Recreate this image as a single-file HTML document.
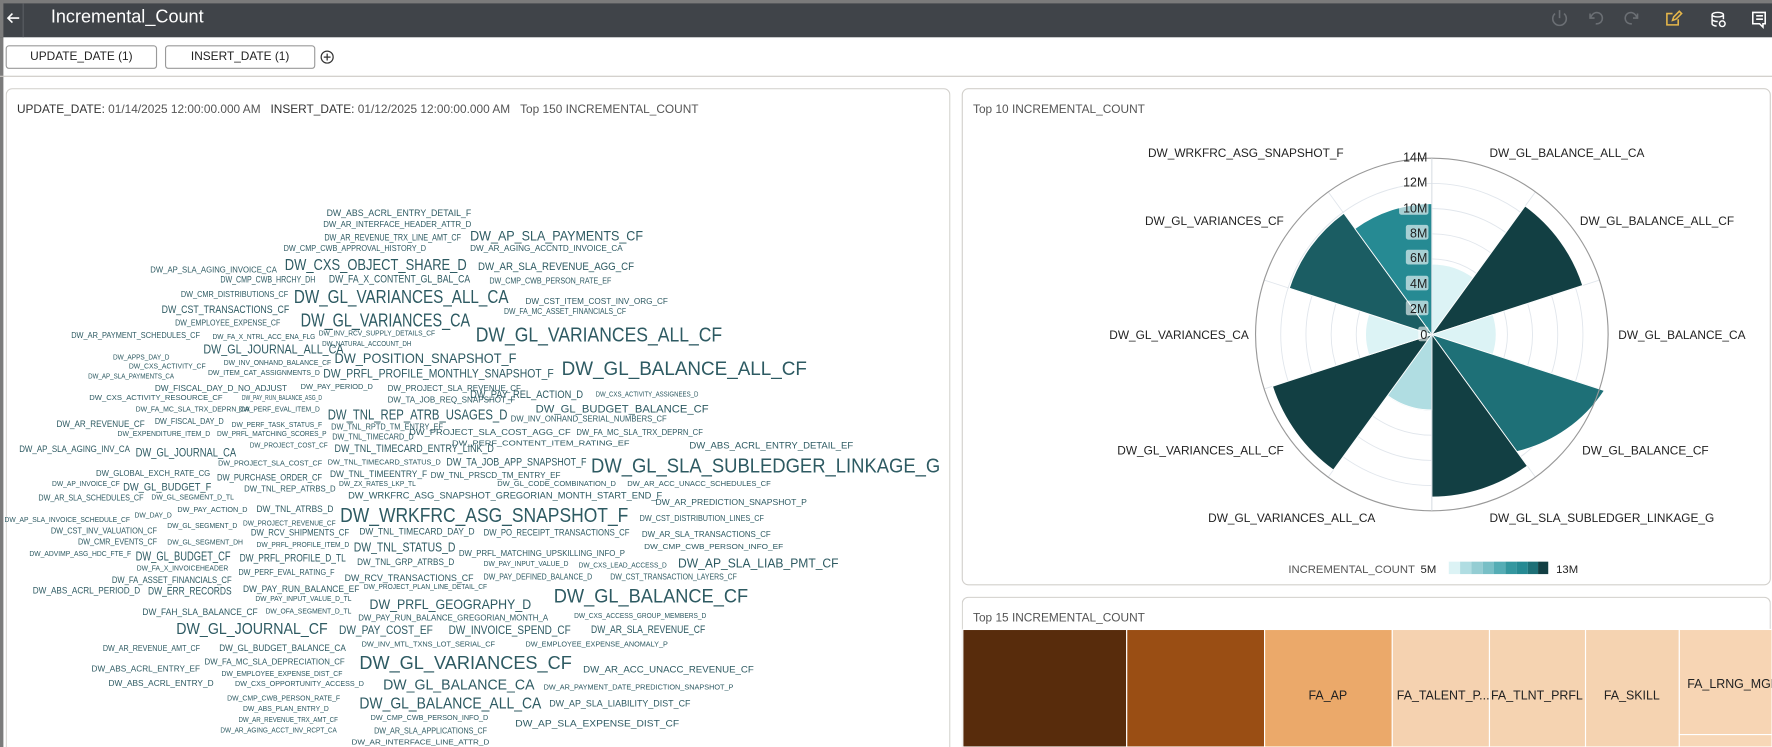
<!DOCTYPE html>
<html><head><meta charset="utf-8"><style>
*{box-sizing:border-box;margin:0;padding:0}
html,body{width:1772px;height:747px;overflow:hidden;background:#fff;font-family:"Liberation Sans",sans-serif}
#s{position:absolute;left:0;top:0;width:1568px;height:661px;transform:scale(1.1301);transform-origin:0 0;overflow:hidden;background:#fff}
.abs{position:absolute}
.hdr{left:0;top:0;width:1568px;height:33px;background:#404449;border-top:3px solid #7b7b7b;border-left:3px solid #7b7b7b}
.btn{position:absolute;top:40px;height:21px;border:1px solid #9a9a9a;border-radius:3px;font-size:10.5px;color:#222;text-align:center;line-height:19px}
.card{position:absolute;border:1px solid #d2d0cc;border-radius:6px;background:#fff}
.t{font-size:10.5px;color:#555;white-space:nowrap}
#wc text{fill:#2d5a62;font-family:"Liberation Sans",sans-serif}
</style></head><body><div id="s">
<div class="abs" style="left:0;top:0;width:3px;height:661px;background:#7b7b7b"></div>
<div class="abs hdr"></div>
<div class="abs" style="left:20px;top:3px;width:1px;height:30px;background:#5a5e63"></div>
<svg class="abs" style="left:5px;top:10px" width="13" height="12" viewBox="0 0 13 12"><path d="M12 6H2M6 2L2 6l4 4" stroke="#fff" stroke-width="1.4" fill="none"/></svg>
<div class="abs" style="left:45px;top:7px;font-size:16px;color:#fff">Incremental_Count</div>
<svg class="abs" style="left:1370px;top:7px" width="195" height="20" viewBox="0 0 195 20">
<g fill="none" stroke="#6b6f74" stroke-width="1.4"><path d="M6 5a6 6 0 1 0 8 0M10 2v7"/><path d="M42 14a5 5 0 1 0-3-8l-2 3M37 5v4h4"/><path d="M74 14a5 5 0 1 1 3-8l2 3M79 5v4h-4"/></g>
<g fill="none" stroke="#e5b64a" stroke-width="1.4"><path d="M110 5h-5v10h10v-5"/><path d="M110 11l1-3 5-5 2 2-5 5z"/></g>
<g fill="none" stroke="#fff" stroke-width="1.3"><ellipse cx="150" cy="6" rx="5" ry="2"/><path d="M145 6v8c0 1 2 2 4 2M155 6v4M145 10c0 1 2 2 5 2"/><circle cx="154" cy="14" r="2.5"/></g>
<g fill="none" stroke="#fff" stroke-width="1.4"><path d="M181 4h11v10h-2v3l-3-3h-6z"/><path d="M184 7h6M184 10h6"/></g>
</svg>
<div class="btn" style="left:5px;width:134px">UPDATE_DATE (1)</div>
<div class="btn" style="left:146px;width:133px">INSERT_DATE (1)</div>
<svg class="abs" style="left:283px;top:44px" width="13" height="13"><circle cx="6.5" cy="6.5" r="5.3" fill="none" stroke="#333" stroke-width="1.1"/><path d="M6.5 3.5v6M3.5 6.5h6" stroke="#333" stroke-width="1.1"/></svg>
<div class="abs" style="left:0;top:67px;width:1568px;height:1px;background:#ccc9c4"></div>
<div class="card" style="left:5px;top:78px;width:836px;height:583px;border-bottom:none;border-radius:6px 6px 0 0"></div>
<div class="abs t" style="left:15px;top:91px;color:#333">UPDATE_DATE: <span style="color:#555">01/14/2025 12:00:00.000 AM</span>&nbsp;&nbsp;&nbsp;INSERT_DATE: <span style="color:#555">01/12/2025 12:00:00.000 AM</span>&nbsp;&nbsp;&nbsp;<span style="color:#555">Top 150 INCREMENTAL_COUNT</span></div>
<div class="card" style="left:851px;top:78px;width:716px;height:440px"></div>
<div class="abs t" style="left:861px;top:91px">Top 10 INCREMENTAL_COUNT</div>
<div class="card" style="left:851px;top:528px;width:716px;height:133px;border-bottom:none;border-radius:6px 6px 0 0"></div>
<div class="abs t" style="left:861px;top:541px">Top 15 INCREMENTAL_COUNT</div>

<svg class="abs" style="left:0;top:0" width="1568" height="661" viewBox="0 0 1568 661">
<g id="polar">
<g fill="none" stroke="#e1e6ec" stroke-width="0.8">
<circle cx="1267" cy="296" r="22.3"/><circle cx="1267" cy="296" r="44.6"/><circle cx="1267" cy="296" r="66.9"/><circle cx="1267" cy="296" r="89.1"/><circle cx="1267" cy="296" r="111.4"/><circle cx="1267" cy="296" r="133.7"/>
<path d="M1267 296L1267 140M1267 296L1358.7 169.8M1267 296L1415.4 247.8M1267 296L1415.4 344.2M1267 296L1358.7 422.2M1267 296L1267 452M1267 296L1175.3 422.2M1267 296L1118.6 344.2M1267 296L1118.6 247.8M1267 296L1175.3 169.8"/>
</g>
<g stroke="#fff" stroke-width="0.8">
<path d="M1267 296L1267 233.6A62.4 62.4 0 0 1 1303.7 245.5Z" fill="#dcf3f5"/>
<path d="M1267 296L1349.6 182.3A140.4 140.4 0 0 1 1400.5 252.6Z" fill="#123f43"/>
<path d="M1267 296L1321.1 278.4A56.9 56.9 0 0 1 1321.1 313.6Z" fill="#dcf3f5"/>
<path d="M1267 296L1419.6 345.6A128.1 128.1 0 0 1 1342.3 399.6Z" fill="#1e7077"/>
<path d="M1267 296L1351.5 412.3A143.8 143.8 0 0 1 1267 439.8Z" fill="#123f43"/>
<path d="M1267 296L1267 362.8A66.8 66.8 0 0 1 1227.7 350Z" fill="#b0dde2"/>
<path d="M1267 296L1179.9 415.9A148.2 148.2 0 0 1 1126 341.8Z" fill="#123f43"/>
<path d="M1267 296L1211.3 314.1A57.9 57.9 0 0 1 1211.3 277.9Z" fill="#dcf3f5"/>
<path d="M1267 296L1140.9 255A132.6 132.6 0 0 1 1189.1 188.7Z" fill="#1b5d63"/>
<path d="M1267 296L1198.9 202.3A115.9 115.9 0 0 1 1267 180.1Z" fill="#268a93"/>
</g>
<circle cx="1267" cy="296" r="156" fill="none" stroke="#999" stroke-width="1"/>
<line x1="1267" y1="140" x2="1267" y2="452" stroke="#d8dde3" stroke-width="0.8"/>
<g font-size="11" fill="#222" text-anchor="end" font-family="Liberation Sans,sans-serif">
<g fill="#fff" fill-opacity="0.6"><rect x="1238" y="177" width="26" height="13" rx="2"/><rect x="1244" y="199" width="20" height="13" rx="2"/><rect x="1244" y="221" width="20" height="13" rx="2"/><rect x="1244" y="244" width="20" height="13" rx="2"/><rect x="1244" y="266" width="20" height="13" rx="2"/><rect x="1255" y="289" width="9" height="13" rx="2"/></g>
<text x="1263" y="143">14M</text><text x="1263" y="165">12M</text><text x="1263" y="188">10M</text><text x="1263" y="210">8M</text><text x="1263" y="232">6M</text><text x="1263" y="255">4M</text><text x="1263" y="277">2M</text><text x="1263" y="300">0</text>
</g>
<g font-size="10.5" fill="#222" font-family="Liberation Sans,sans-serif">
<text x="1189" y="139" text-anchor="end">DW_WRKFRC_ASG_SNAPSHOT_F</text>
<text x="1318" y="139">DW_GL_BALANCE_ALL_CA</text>
<text x="1136" y="199" text-anchor="end">DW_GL_VARIANCES_CF</text>
<text x="1398" y="199">DW_GL_BALANCE_ALL_CF</text>
<text x="1105" y="300" text-anchor="end">DW_GL_VARIANCES_CA</text>
<text x="1432" y="300">DW_GL_BALANCE_CA</text>
<text x="1136" y="402" text-anchor="end">DW_GL_VARIANCES_ALL_CF</text>
<text x="1400" y="402">DW_GL_BALANCE_CF</text>
<text x="1217" y="462" text-anchor="end">DW_GL_VARIANCES_ALL_CA</text>
<text x="1318" y="462">DW_GL_SLA_SUBLEDGER_LINKAGE_G</text>
<text x="1140" y="507" fill="#555" font-size="10">INCREMENTAL_COUNT</text>
<text x="1257" y="507" font-size="10">5M</text>
<text x="1377" y="507" font-size="10">13M</text>
</g>
<g><rect x="1282" y="497" width="10" height="11" fill="#dcf3f5"/><rect x="1292" y="497" width="10" height="11" fill="#b0dde2"/><rect x="1302" y="497" width="10" height="11" fill="#94cdd3"/><rect x="1312" y="497" width="10" height="11" fill="#78bfc6"/><rect x="1322" y="497" width="10" height="11" fill="#55adb5"/><rect x="1332" y="497" width="10" height="11" fill="#34979f"/><rect x="1342" y="497" width="10" height="11" fill="#268a93"/><rect x="1352" y="497" width="9" height="11" fill="#1e7077"/><rect x="1361" y="497" width="9" height="11" fill="#123f43"/></g>
</g>
<g id="tm" stroke="#fff" stroke-width="1">
<rect x="852" y="557" width="145" height="104" fill="#582c0c"/>
<rect x="997" y="557" width="122" height="104" fill="#9a4e14"/>
<rect x="1119" y="557" width="113" height="104" fill="#eba96a"/>
<rect x="1232" y="557" width="86" height="104" fill="#f5d2b0"/>
<rect x="1318" y="557" width="85" height="104" fill="#f5d3b1"/>
<rect x="1403" y="557" width="83" height="104" fill="#f5d3b1"/>
<rect x="1486" y="557" width="82" height="93" fill="#f7d5b4"/>
<rect x="1486" y="650" width="82" height="11" fill="#f7d7b7"/>
</g>
<g font-size="11" fill="#222" font-family="Liberation Sans,sans-serif">
<text x="1175" y="619" text-anchor="middle">FA_AP</text>
<text x="1236" y="619">FA_TALENT_P...</text>
<text x="1360" y="619" text-anchor="middle">FA_TLNT_PRFL</text>
<text x="1444" y="619" text-anchor="middle">FA_SKILL</text>
<text x="1493" y="609">FA_LRNG_MGM</text>
</g>
<g id="wc">
<text x="289" y="191" font-size="8" textLength="128" lengthAdjust="spacingAndGlyphs">DW_ABS_ACRL_ENTRY_DETAIL_F</text>
<text x="286" y="201" font-size="7" textLength="131" lengthAdjust="spacingAndGlyphs">DW_AR_INTERFACE_HEADER_ATTR_D</text>
<text x="287" y="213" font-size="8" textLength="121" lengthAdjust="spacingAndGlyphs">DW_AR_REVENUE_TRX_LINE_AMT_CF</text>
<text x="416" y="213" font-size="12.5" textLength="153" lengthAdjust="spacingAndGlyphs">DW_AP_SLA_PAYMENTS_CF</text>
<text x="251" y="222" font-size="7" textLength="126" lengthAdjust="spacingAndGlyphs">DW_CMP_CWB_APPROVAL_HISTORY_D</text>
<text x="416" y="222" font-size="7" textLength="135" lengthAdjust="spacingAndGlyphs">DW_AR_AGING_ACCNTD_INVOICE_CA</text>
<text x="133" y="241" font-size="7" textLength="112" lengthAdjust="spacingAndGlyphs">DW_AP_SLA_AGING_INVOICE_CA</text>
<text x="252" y="239" font-size="13.5" textLength="161" lengthAdjust="spacingAndGlyphs">DW_CXS_OBJECT_SHARE_D</text>
<text x="423" y="239" font-size="9.5" textLength="138" lengthAdjust="spacingAndGlyphs">DW_AR_SLA_REVENUE_AGG_CF</text>
<text x="195" y="250" font-size="8.5" textLength="84" lengthAdjust="spacingAndGlyphs">DW_CMP_CWB_HRCHY_DH</text>
<text x="291" y="250" font-size="9.5" textLength="125" lengthAdjust="spacingAndGlyphs">DW_FA_X_CONTENT_GL_BAL_CA</text>
<text x="433" y="251" font-size="7" textLength="108" lengthAdjust="spacingAndGlyphs">DW_CMP_CWB_PERSON_RATE_EF</text>
<text x="160" y="263" font-size="7.5" textLength="95" lengthAdjust="spacingAndGlyphs">DW_CMR_DISTRIBUTIONS_CF</text>
<text x="260" y="268" font-size="16" textLength="190" lengthAdjust="spacingAndGlyphs">DW_GL_VARIANCES_ALL_CA</text>
<text x="143" y="277" font-size="9.5" textLength="113" lengthAdjust="spacingAndGlyphs">DW_CST_TRANSACTIONS_CF</text>
<text x="465" y="269" font-size="7" textLength="126" lengthAdjust="spacingAndGlyphs">DW_CST_ITEM_COST_INV_ORG_CF</text>
<text x="266" y="289" font-size="16" textLength="150" lengthAdjust="spacingAndGlyphs">DW_GL_VARIANCES_CA</text>
<text x="155" y="288" font-size="7.5" textLength="93" lengthAdjust="spacingAndGlyphs">DW_EMPLOYEE_EXPENSE_CF</text>
<text x="446" y="278" font-size="7" textLength="108" lengthAdjust="spacingAndGlyphs">DW_FA_MC_ASSET_FINANCIALS_CF</text>
<text x="63" y="299" font-size="7.5" textLength="114" lengthAdjust="spacingAndGlyphs">DW_AR_PAYMENT_SCHEDULES_CF</text>
<text x="188" y="300" font-size="6.5" textLength="91" lengthAdjust="spacingAndGlyphs">DW_FA_X_NTRL_ACC_ENA_FLG</text>
<text x="282" y="297" font-size="6.5" textLength="103" lengthAdjust="spacingAndGlyphs">DW_INV_RCV_SUPPLY_DETAILS_CF</text>
<text x="421" y="302" font-size="18" textLength="218" lengthAdjust="spacingAndGlyphs">DW_GL_VARIANCES_ALL_CF</text>
<text x="285" y="306" font-size="6.5" textLength="79" lengthAdjust="spacingAndGlyphs">DW_NATURAL_ACCOUNT_DH</text>
<text x="180" y="313" font-size="11" textLength="124" lengthAdjust="spacingAndGlyphs">DW_GL_JOURNAL_ALL_CA</text>
<text x="100" y="318" font-size="6.5" textLength="50" lengthAdjust="spacingAndGlyphs">DW_APPS_DAY_D</text>
<text x="114" y="326" font-size="6.5" textLength="68" lengthAdjust="spacingAndGlyphs">DW_CXS_ACTIVITY_CF</text>
<text x="198" y="323" font-size="6.5" textLength="95" lengthAdjust="spacingAndGlyphs">DW_INV_ONHAND_BALANCE_CF</text>
<text x="296" y="321" font-size="12.5" textLength="161" lengthAdjust="spacingAndGlyphs">DW_POSITION_SNAPSHOT_F</text>
<text x="78" y="335" font-size="6.5" textLength="76" lengthAdjust="spacingAndGlyphs">DW_AP_SLA_PAYMENTS_CA</text>
<text x="184" y="332" font-size="6.5" textLength="99" lengthAdjust="spacingAndGlyphs">DW_ITEM_CAT_ASSIGNMENTS_D</text>
<text x="286" y="334" font-size="10.5" textLength="204" lengthAdjust="spacingAndGlyphs">DW_PRFL_PROFILE_MONTHLY_SNAPSHOT_F</text>
<text x="497" y="332" font-size="17" textLength="217" lengthAdjust="spacingAndGlyphs">DW_GL_BALANCE_ALL_CF</text>
<text x="137" y="346" font-size="7.5" textLength="117" lengthAdjust="spacingAndGlyphs">DW_FISCAL_DAY_D_NO_ADJUST</text>
<text x="266" y="344" font-size="6.5" textLength="64" lengthAdjust="spacingAndGlyphs">DW_PAY_PERIOD_D</text>
<text x="343" y="346" font-size="7.5" textLength="118" lengthAdjust="spacingAndGlyphs">DW_PROJECT_SLA_REVENUE_CF</text>
<text x="416" y="352" font-size="10" textLength="100" lengthAdjust="spacingAndGlyphs">DW_PAY_REL_ACTION_D</text>
<text x="527" y="351" font-size="6.5" textLength="91" lengthAdjust="spacingAndGlyphs">DW_CXS_ACTIVITY_ASSIGNEES_D</text>
<text x="79" y="354" font-size="6.5" textLength="118" lengthAdjust="spacingAndGlyphs">DW_CXS_ACTIVITY_RESOURCE_CF</text>
<text x="214" y="354" font-size="6.5" textLength="71" lengthAdjust="spacingAndGlyphs">DW_PAY_RUN_BALANCE_ASG_D</text>
<text x="343" y="356" font-size="7.5" textLength="113" lengthAdjust="spacingAndGlyphs">DW_TA_JOB_REQ_SNAPSHOT_F</text>
<text x="474" y="365" font-size="10" textLength="153" lengthAdjust="spacingAndGlyphs">DW_GL_BUDGET_BALANCE_CF</text>
<text x="120" y="364" font-size="6.5" textLength="101" lengthAdjust="spacingAndGlyphs">DW_FA_MC_SLA_TRX_DEPRN_CA</text>
<text x="211" y="364" font-size="6.5" textLength="72" lengthAdjust="spacingAndGlyphs">DW_PERF_EVAL_ITEM_D</text>
<text x="290" y="371" font-size="13" textLength="159" lengthAdjust="spacingAndGlyphs">DW_TNL_REP_ATRB_USAGES_D</text>
<text x="452" y="373" font-size="7.5" textLength="138" lengthAdjust="spacingAndGlyphs">DW_INV_ONHAND_SERIAL_NUMBERS_CF</text>
<text x="50" y="378" font-size="8.5" textLength="78" lengthAdjust="spacingAndGlyphs">DW_AR_REVENUE_CF</text>
<text x="137" y="375" font-size="7.5" textLength="61" lengthAdjust="spacingAndGlyphs">DW_FISCAL_DAY_D</text>
<text x="205" y="378" font-size="6.5" textLength="80" lengthAdjust="spacingAndGlyphs">DW_PERF_TASK_STATUS_F</text>
<text x="293" y="380" font-size="7.5" textLength="99" lengthAdjust="spacingAndGlyphs">DW_TNL_RPTD_TM_ENTRY_EF</text>
<text x="362" y="385" font-size="7.5" textLength="143" lengthAdjust="spacingAndGlyphs">DW_PROJECT_SLA_COST_AGG_CF</text>
<text x="510" y="385" font-size="7.5" textLength="112" lengthAdjust="spacingAndGlyphs">DW_FA_MC_SLA_TRX_DEPRN_CF</text>
<text x="104" y="386" font-size="6.5" textLength="82" lengthAdjust="spacingAndGlyphs">DW_EXPENDITURE_ITEM_D</text>
<text x="192" y="386" font-size="6.5" textLength="97" lengthAdjust="spacingAndGlyphs">DW_PRFL_MATCHING_SCORES_P</text>
<text x="294" y="389" font-size="7.5" textLength="72" lengthAdjust="spacingAndGlyphs">DW_TNL_TIMECARD_D</text>
<text x="400" y="394" font-size="6.5" textLength="157" lengthAdjust="spacingAndGlyphs">DW_PERF_CONTENT_ITEM_RATING_EF</text>
<text x="610" y="397" font-size="8.5" textLength="145" lengthAdjust="spacingAndGlyphs">DW_ABS_ACRL_ENTRY_DETAIL_EF</text>
<text x="17" y="400" font-size="8.5" textLength="98" lengthAdjust="spacingAndGlyphs">DW_AP_SLA_AGING_INV_CA</text>
<text x="120" y="404" font-size="10.5" textLength="89" lengthAdjust="spacingAndGlyphs">DW_GL_JOURNAL_CA</text>
<text x="221" y="396" font-size="6.5" textLength="69" lengthAdjust="spacingAndGlyphs">DW_PROJECT_COST_CF</text>
<text x="296" y="400" font-size="9.5" textLength="141" lengthAdjust="spacingAndGlyphs">DW_TNL_TIMECARD_ENTRY_LINK_D</text>
<text x="290" y="411" font-size="6.5" textLength="100" lengthAdjust="spacingAndGlyphs">DW_TNL_TIMECARD_STATUS_D</text>
<text x="395" y="412" font-size="9.5" textLength="124" lengthAdjust="spacingAndGlyphs">DW_TA_JOB_APP_SNAPSHOT_F</text>
<text x="523" y="418" font-size="18" textLength="309" lengthAdjust="spacingAndGlyphs">DW_GL_SLA_SUBLEDGER_LINKAGE_G</text>
<text x="193" y="412" font-size="6.5" textLength="92" lengthAdjust="spacingAndGlyphs">DW_PROJECT_SLA_COST_CF</text>
<text x="85" y="421" font-size="7.5" textLength="101" lengthAdjust="spacingAndGlyphs">DW_GLOBAL_EXCH_RATE_CG</text>
<text x="192" y="425" font-size="8.5" textLength="93" lengthAdjust="spacingAndGlyphs">DW_PURCHASE_ORDER_CF</text>
<text x="292" y="422" font-size="8.5" textLength="86" lengthAdjust="spacingAndGlyphs">DW_TNL_TIMEENTRY_F</text>
<text x="381" y="423" font-size="7.5" textLength="115" lengthAdjust="spacingAndGlyphs">DW_TNL_PRSCD_TM_ENTRY_EF</text>
<text x="46" y="430" font-size="6.5" textLength="60" lengthAdjust="spacingAndGlyphs">DW_AP_INVOICE_CF</text>
<text x="109" y="434" font-size="9.5" textLength="78" lengthAdjust="spacingAndGlyphs">DW_GL_BUDGET_F</text>
<text x="300" y="430" font-size="6.5" textLength="68" lengthAdjust="spacingAndGlyphs">DW_ZX_RATES_LKP_TL</text>
<text x="440" y="430" font-size="6.5" textLength="105" lengthAdjust="spacingAndGlyphs">DW_GL_CODE_COMBINATION_D</text>
<text x="555" y="430" font-size="6.5" textLength="127" lengthAdjust="spacingAndGlyphs">DW_AR_ACC_UNACC_SCHEDULES_CF</text>
<text x="216" y="435" font-size="7.5" textLength="81" lengthAdjust="spacingAndGlyphs">DW_TNL_REP_ATRBS_D</text>
<text x="308" y="441" font-size="8.5" textLength="278" lengthAdjust="spacingAndGlyphs">DW_WRKFRC_ASG_SNAPSHOT_GREGORIAN_MONTH_START_END_F</text>
<text x="34" y="443" font-size="7.5" textLength="93" lengthAdjust="spacingAndGlyphs">DW_AR_SLA_SCHEDULES_CF</text>
<text x="134" y="442" font-size="6.5" textLength="73" lengthAdjust="spacingAndGlyphs">DW_GL_SEGMENT_D_TL</text>
<text x="580" y="447" font-size="7.5" textLength="134" lengthAdjust="spacingAndGlyphs">DW_AR_PREDICTION_SNAPSHOT_P</text>
<text x="157" y="453" font-size="6.5" textLength="62" lengthAdjust="spacingAndGlyphs">DW_PAY_ACTION_D</text>
<text x="227" y="453" font-size="8.5" textLength="68" lengthAdjust="spacingAndGlyphs">DW_TNL_ATRBS_D</text>
<text x="4" y="462" font-size="6.5" textLength="111" lengthAdjust="spacingAndGlyphs">DW_AP_SLA_INVOICE_SCHEDULE_CF</text>
<text x="119" y="458" font-size="6.5" textLength="33" lengthAdjust="spacingAndGlyphs">DW_DAY_D</text>
<text x="301" y="462" font-size="18" textLength="255" lengthAdjust="spacingAndGlyphs">DW_WRKFRC_ASG_SNAPSHOT_F</text>
<text x="215" y="465" font-size="6.5" textLength="82" lengthAdjust="spacingAndGlyphs">DW_PROJECT_REVENUE_CF</text>
<text x="566" y="461" font-size="7.5" textLength="110" lengthAdjust="spacingAndGlyphs">DW_CST_DISTRIBUTION_LINES_CF</text>
<text x="45" y="472" font-size="7.5" textLength="94" lengthAdjust="spacingAndGlyphs">DW_CST_INV_VALUATION_CF</text>
<text x="148" y="467" font-size="6.5" textLength="62" lengthAdjust="spacingAndGlyphs">DW_GL_SEGMENT_D</text>
<text x="222" y="474" font-size="8.5" textLength="87" lengthAdjust="spacingAndGlyphs">DW_RCV_SHIPMENTS_CF</text>
<text x="318" y="473" font-size="8.5" textLength="102" lengthAdjust="spacingAndGlyphs">DW_TNL_TIMECARD_DAY_D</text>
<text x="428" y="474" font-size="8.5" textLength="129" lengthAdjust="spacingAndGlyphs">DW_PO_RECEIPT_TRANSACTIONS_CF</text>
<text x="568" y="475" font-size="7.5" textLength="114" lengthAdjust="spacingAndGlyphs">DW_AR_SLA_TRANSACTIONS_CF</text>
<text x="69" y="482" font-size="7.5" textLength="70" lengthAdjust="spacingAndGlyphs">DW_CMR_EVENTS_CF</text>
<text x="148" y="482" font-size="6.5" textLength="67" lengthAdjust="spacingAndGlyphs">DW_GL_SEGMENT_DH</text>
<text x="227" y="484" font-size="6.5" textLength="82" lengthAdjust="spacingAndGlyphs">DW_PRFL_PROFILE_ITEM_D</text>
<text x="313" y="488" font-size="11" textLength="90" lengthAdjust="spacingAndGlyphs">DW_TNL_STATUS_D</text>
<text x="406" y="492" font-size="7.5" textLength="147" lengthAdjust="spacingAndGlyphs">DW_PRFL_MATCHING_UPSKILLING_INFO_P</text>
<text x="570" y="486" font-size="6.5" textLength="123" lengthAdjust="spacingAndGlyphs">DW_CMP_CWB_PERSON_INFO_EF</text>
<text x="26" y="492" font-size="6.5" textLength="90" lengthAdjust="spacingAndGlyphs">DW_ADVIMP_ASG_HDC_FTE_F</text>
<text x="120" y="496" font-size="11" textLength="84" lengthAdjust="spacingAndGlyphs">DW_GL_BUDGET_CF</text>
<text x="212" y="497" font-size="9.5" textLength="94" lengthAdjust="spacingAndGlyphs">DW_PRFL_PROFILE_D_TL</text>
<text x="316" y="500" font-size="8.5" textLength="86" lengthAdjust="spacingAndGlyphs">DW_TNL_GRP_ATRBS_D</text>
<text x="428" y="501" font-size="6.5" textLength="75" lengthAdjust="spacingAndGlyphs">DW_PAY_INPUT_VALUE_D</text>
<text x="512" y="502" font-size="6.5" textLength="78" lengthAdjust="spacingAndGlyphs">DW_CXS_LEAD_ACCESS_D</text>
<text x="600" y="502" font-size="11.5" textLength="142" lengthAdjust="spacingAndGlyphs">DW_AP_SLA_LIAB_PMT_CF</text>
<text x="121" y="505" font-size="6.5" textLength="81" lengthAdjust="spacingAndGlyphs">DW_FA_X_INVOICEHEADER</text>
<text x="211" y="509" font-size="7.5" textLength="85" lengthAdjust="spacingAndGlyphs">DW_PERF_EVAL_RATING_F</text>
<text x="305" y="514" font-size="8.5" textLength="114" lengthAdjust="spacingAndGlyphs">DW_RCV_TRANSACTIONS_CF</text>
<text x="428" y="513" font-size="7.5" textLength="96" lengthAdjust="spacingAndGlyphs">DW_PAY_DEFINED_BALANCE_D</text>
<text x="540" y="513" font-size="7.5" textLength="112" lengthAdjust="spacingAndGlyphs">DW_CST_TRANSACTION_LAYERS_CF</text>
<text x="99" y="516" font-size="8.5" textLength="106" lengthAdjust="spacingAndGlyphs">DW_FA_ASSET_FINANCIALS_CF</text>
<text x="29" y="525" font-size="8.5" textLength="95" lengthAdjust="spacingAndGlyphs">DW_ABS_ACRL_PERIOD_D</text>
<text x="131" y="526" font-size="9.5" textLength="74" lengthAdjust="spacingAndGlyphs">DW_ERR_RECORDS</text>
<text x="215" y="524" font-size="8.5" textLength="103" lengthAdjust="spacingAndGlyphs">DW_PAY_RUN_BALANCE_EF</text>
<text x="322" y="521" font-size="6.5" textLength="109" lengthAdjust="spacingAndGlyphs">DW_PROJECT_PLAN_LINE_DETAIL_CF</text>
<text x="490" y="533" font-size="17" textLength="172" lengthAdjust="spacingAndGlyphs">DW_GL_BALANCE_CF</text>
<text x="226" y="532" font-size="6.5" textLength="85" lengthAdjust="spacingAndGlyphs">DW_PAY_INPUT_VALUE_D_TL</text>
<text x="327" y="539" font-size="12.5" textLength="143" lengthAdjust="spacingAndGlyphs">DW_PRFL_GEOGRAPHY_D</text>
<text x="126" y="544" font-size="8.5" textLength="102" lengthAdjust="spacingAndGlyphs">DW_FAH_SLA_BALANCE_CF</text>
<text x="235" y="543" font-size="6.5" textLength="76" lengthAdjust="spacingAndGlyphs">DW_OFA_SEGMENT_D_TL</text>
<text x="317" y="549" font-size="7.5" textLength="168" lengthAdjust="spacingAndGlyphs">DW_PAY_RUN_BALANCE_GREGORIAN_MONTH_A</text>
<text x="508" y="547" font-size="6.5" textLength="117" lengthAdjust="spacingAndGlyphs">DW_CXS_ACCESS_GROUP_MEMBERS_D</text>
<text x="156" y="561" font-size="14" textLength="134" lengthAdjust="spacingAndGlyphs">DW_GL_JOURNAL_CF</text>
<text x="300" y="561" font-size="10.5" textLength="83" lengthAdjust="spacingAndGlyphs">DW_PAY_COST_EF</text>
<text x="397" y="561" font-size="10.5" textLength="108" lengthAdjust="spacingAndGlyphs">DW_INVOICE_SPEND_CF</text>
<text x="523" y="560" font-size="9.5" textLength="101" lengthAdjust="spacingAndGlyphs">DW_AR_SLA_REVENUE_CF</text>
<text x="91" y="576" font-size="7.5" textLength="86" lengthAdjust="spacingAndGlyphs">DW_AR_REVENUE_AMT_CF</text>
<text x="194" y="576" font-size="8.5" textLength="112" lengthAdjust="spacingAndGlyphs">DW_GL_BUDGET_BALANCE_CA</text>
<text x="320" y="572" font-size="6.5" textLength="118" lengthAdjust="spacingAndGlyphs">DW_INV_MTL_TXNS_LOT_SERIAL_CF</text>
<text x="465" y="572" font-size="6.5" textLength="126" lengthAdjust="spacingAndGlyphs">DW_EMPLOYEE_EXPENSE_ANOMALY_P</text>
<text x="318" y="592" font-size="16" textLength="188" lengthAdjust="spacingAndGlyphs">DW_GL_VARIANCES_CF</text>
<text x="516" y="595" font-size="8.5" textLength="151" lengthAdjust="spacingAndGlyphs">DW_AR_ACC_UNACC_REVENUE_CF</text>
<text x="81" y="594" font-size="7.5" textLength="96" lengthAdjust="spacingAndGlyphs">DW_ABS_ACRL_ENTRY_EF</text>
<text x="181" y="588" font-size="7.5" textLength="124" lengthAdjust="spacingAndGlyphs">DW_FA_MC_SLA_DEPRECIATION_CF</text>
<text x="196" y="598" font-size="6.5" textLength="107" lengthAdjust="spacingAndGlyphs">DW_EMPLOYEE_EXPENSE_DIST_CF</text>
<text x="96" y="607" font-size="7.5" textLength="93" lengthAdjust="spacingAndGlyphs">DW_ABS_ACRL_ENTRY_D</text>
<text x="208" y="607" font-size="6.5" textLength="114" lengthAdjust="spacingAndGlyphs">DW_CXS_OPPORTUNITY_ACCESS_D</text>
<text x="339" y="610" font-size="13" textLength="134" lengthAdjust="spacingAndGlyphs">DW_GL_BALANCE_CA</text>
<text x="481" y="610" font-size="6.5" textLength="168" lengthAdjust="spacingAndGlyphs">DW_AR_PAYMENT_DATE_PREDICTION_SNAPSHOT_P</text>
<text x="201" y="620" font-size="6.5" textLength="100" lengthAdjust="spacingAndGlyphs">DW_CMP_CWB_PERSON_RATE_F</text>
<text x="215" y="629" font-size="6.5" textLength="76" lengthAdjust="spacingAndGlyphs">DW_ABS_PLAN_ENTRY_D</text>
<text x="318" y="627" font-size="14" textLength="161" lengthAdjust="spacingAndGlyphs">DW_GL_BALANCE_ALL_CA</text>
<text x="486" y="625" font-size="8.5" textLength="125" lengthAdjust="spacingAndGlyphs">DW_AP_SLA_LIABILITY_DIST_CF</text>
<text x="211" y="639" font-size="6.5" textLength="88" lengthAdjust="spacingAndGlyphs">DW_AR_REVENUE_TRX_AMT_CF</text>
<text x="328" y="637" font-size="6.5" textLength="104" lengthAdjust="spacingAndGlyphs">DW_CMP_CWB_PERSON_INFO_D</text>
<text x="195" y="648" font-size="6.5" textLength="103" lengthAdjust="spacingAndGlyphs">DW_AR_AGING_ACCT_INV_RCPT_CA</text>
<text x="331" y="649" font-size="7.5" textLength="100" lengthAdjust="spacingAndGlyphs">DW_AR_SLA_APPLICATIONS_CF</text>
<text x="456" y="643" font-size="8.5" textLength="145" lengthAdjust="spacingAndGlyphs">DW_AP_SLA_EXPENSE_DIST_CF</text>
<text x="311" y="659" font-size="6.5" textLength="122" lengthAdjust="spacingAndGlyphs">DW_AR_INTERFACE_LINE_ATTR_D</text>
</g>
</svg>
</div></body></html>
